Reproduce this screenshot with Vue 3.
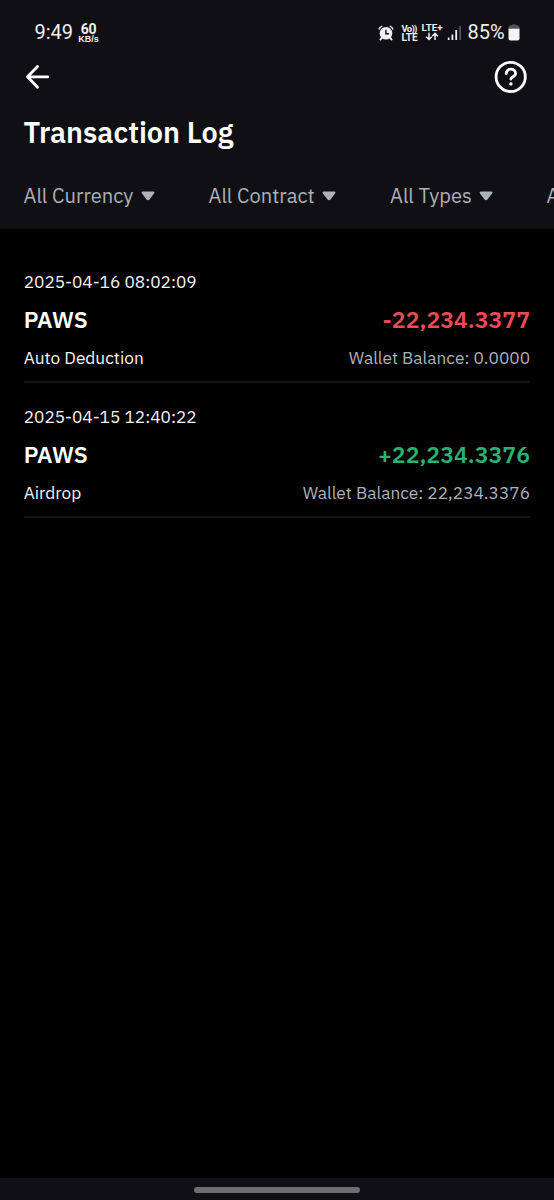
<script setup>
const filters = [
  { label: 'All Currency', cls: 'currency' },
  { label: 'All Contract', cls: 'contract' },
  { label: 'All Types', cls: 'types' },
  { label: 'All Time', cls: 'time' },
]
const entries = [
  { time: '2025-04-16 08:02:09', coin: 'PAWS', amount: '-22,234.3377', kind: 'Auto Deduction', balance: '0.0000', tone: 'down' },
  { time: '2025-04-15 12:40:22', coin: 'PAWS', amount: '+22,234.3376', kind: 'Airdrop', balance: '22,234.3376', tone: 'up' },
]
</script>

<template>
  <div class="screen">
    <header class="top">
      <div class="status">
        <span class="clock">9:49</span>
        <span class="speed"><b>60</b><i>KB/s</i></span>
        <svg class="alarm" width="16" height="16" viewBox="0 0 16 16">
          <g fill="none" stroke="#efeff1" stroke-linecap="round">
            <path d="M1.2 4Q1.8 2.2 3.8 1.4M14.8 4Q14.2 2.2 12.2 1.4" stroke-width="1.5" />
            <path d="M3.8 12.8 2.4 14.6M12.2 12.8l1.4 1.8" stroke-width="1.9" />
          </g>
          <circle cx="8" cy="8.2" r="6.3" fill="#efeff1" />
          <path d="M7.9 4.8V8.7H10.9" fill="none" stroke="#101014" stroke-width="1.4" />
        </svg>
        <span class="net volte"><span class="vo">Vo))</span><span>LTE</span></span>
        <span class="net lte"><span>LTE+</span>
          <svg width="14" height="9" viewBox="0 0 14 9"><path d="M4 .8V7.4M1.2 4.7 4 7.5 6.8 4.7M10 8V1.4M7.2 4.2 10 1.4l2.8 2.8" fill="none" stroke="#efeff1" stroke-width="1.5" /></svg>
        </span>
        <svg class="signal" width="15" height="16" viewBox="0 0 15 16">
          <path d="M.8 12.5h1.7V15H.8zM4.5 9.5h1.8V15H4.5zM8.3 5h1.8v10H8.3z" fill="#efeff1" />
          <path d="M12.3 1H14v14h-1.7z" fill="#55555a" />
        </svg>
        <span class="percent">85%</span>
        <svg class="battery" width="12" height="17" viewBox="0 0 12 17">
          <path d="M3.4 1.6Q3.4.5 4.5.5h3Q8.6.5 8.6 1.6h1Q11.5 1.6 11.5 3.5V6H.5V3.5Q.5 1.6 2.4 1.6z" fill="#55555a" />
          <path d="M.5 4.8h11v9.7q0 2-2 2h-7q-2 0-2-2z" fill="#f3f3f5" />
        </svg>
      </div>
      <nav class="nav">
        <svg width="28" height="28" viewBox="0 0 28 28"><path d="M13.5 3.5 3.5 13.8 13.5 24.2M3.8 13.8H23.8" fill="none" stroke="#fff" stroke-width="2.8" stroke-linecap="round" stroke-linejoin="round" /></svg>
        <svg width="34" height="34" viewBox="0 0 34 34">
          <circle cx="16.7" cy="16.9" r="14.6" fill="none" stroke="#fff" stroke-width="2.8" />
          <path d="M12.2 13.8C12.2 7.6 21.6 7.7 21.6 13.6C21.6 17.2 16.9 16.5 16.9 19" fill="none" stroke="#fff" stroke-width="2.8" stroke-linecap="round" />
          <circle cx="16.9" cy="23.9" r="1.7" fill="#fff" />
        </svg>
      </nav>
      <h1>Transaction Log</h1>
      <div class="filters">
        <div v-for="f in filters" :key="f.cls" class="filter" :class="f.cls">
          <span>{{ f.label }}</span>
          <svg width="14" height="10" viewBox="0 0 14 10"><path d="M1.8.5H12.2Q14.3.7 13 2.5L8.5 8.4Q7 10 5.5 8.4L1 2.5Q-.3.7 1.8.5z" fill="#adb1b8" /></svg>
        </div>
      </div>
    </header>

    <main>
      <article v-for="e in entries" :key="e.time" class="entry">
        <time>{{ e.time }}</time>
        <div class="line main-line">
          <span class="coin">{{ e.coin }}</span>
          <span class="amount" :class="e.tone">{{ e.amount }}</span>
        </div>
        <div class="line sub-line">
          <span>{{ e.kind }}</span>
          <span class="balance">Wallet Balance: {{ e.balance }}</span>
        </div>
      </article>
    </main>

    <footer><div class="handle"></div></footer>
  </div>
</template>

<style>
body { background: #000; }
</style>

<style scoped>
* { box-sizing: border-box; }
.screen {
  width: 554px; height: 1200px; overflow: hidden; background: #000; color: #fff;
  display: flex; flex-direction: column;
  font-family: "IBM Plex Sans", "Noto Sans", sans-serif;
}
.top { height: 229px; background: #101014; flex: none; }
.status {
  height: 54px; padding: 11px 33px 0 34.5px; display: flex; align-items: center;
  color: #efeff1; font-family: Roboto, sans-serif;
}
.clock { width: 43.5px; font-size: 20px; line-height: 24px; margin-top: -2px; }
.speed { width: 21px; display: flex; flex-direction: column; align-items: center; padding-top: 1px; }
.speed b { font: 700 14px/12px Roboto, sans-serif; letter-spacing: -0.3px; }
.speed i { font: 700 9px/9px "Liberation Sans", sans-serif; }
.alarm { margin-left: 278.5px; }
.net { display: flex; flex-direction: column; font-weight: 700; font-size: 10px; line-height: 9px; white-space: nowrap; }
.volte { margin-left: 8px; width: 20px; }
.vo { letter-spacing: -0.7px; font-size: 9.5px; }
.lte { align-items: center; width: 21px; font-size: 9.8px; }
.lte span { margin-top: -1px; }
.signal { margin-left: 4px; }
.percent { margin-left: 6px; width: 40px; font-size: 20px; line-height: 24px; margin-top: -2px; }
.battery { margin-left: 0.5px; }
.nav { height: 46px; padding: 0 26px 0 24px; display: flex; align-items: center; justify-content: space-between; }
h1 { margin: 12px 0 0 23.5px; height: 42px; font-size: 28.8px; line-height: 41px; font-weight: 600; }
.filters { display: flex; height: 75px; padding: 8px 0 0 23.5px; align-items: center; white-space: nowrap; }
.filter { display: flex; align-items: center; justify-content: space-between; flex: none; color: #adb1b8; font-size: 20.16px; line-height: 28px; }
.filter span { padding-top: 1px; }
.filter svg { margin-top: 1px; }
.currency { width: 131px; margin-right: 54px; }
.contract { width: 127px; margin-right: 54.5px; }
.types { width: 102.5px; margin-right: 54px; }
main { flex: 1; padding: 30px 24px 0 23.7px; }
.entry { height: 135px; padding-top: 22px; border-bottom: 2px solid #131313; }
.entry:first-child { height: 124px; padding-top: 11px; }
time { display: block; font-size: 17.28px; line-height: 24px; color: #f5f5f5; }
.line { display: flex; justify-content: space-between; white-space: nowrap; }
.main-line { margin-top: 9.5px; font-size: 23.04px; line-height: 30px; font-weight: 600; }
.sub-line { margin-top: 12.5px; font-size: 17.28px; line-height: 24px; color: #f5f5f5; }
.up { color: #2bb270; }
.down { color: #f04a58; }
.sub-line .balance { color: #adb1b8; }
footer { height: 22px; flex: none; background: #101014; display: flex; justify-content: center; padding-top: 9px; }
.handle { width: 166px; height: 6px; border-radius: 3px; background: #6e6e6f; }
</style>
